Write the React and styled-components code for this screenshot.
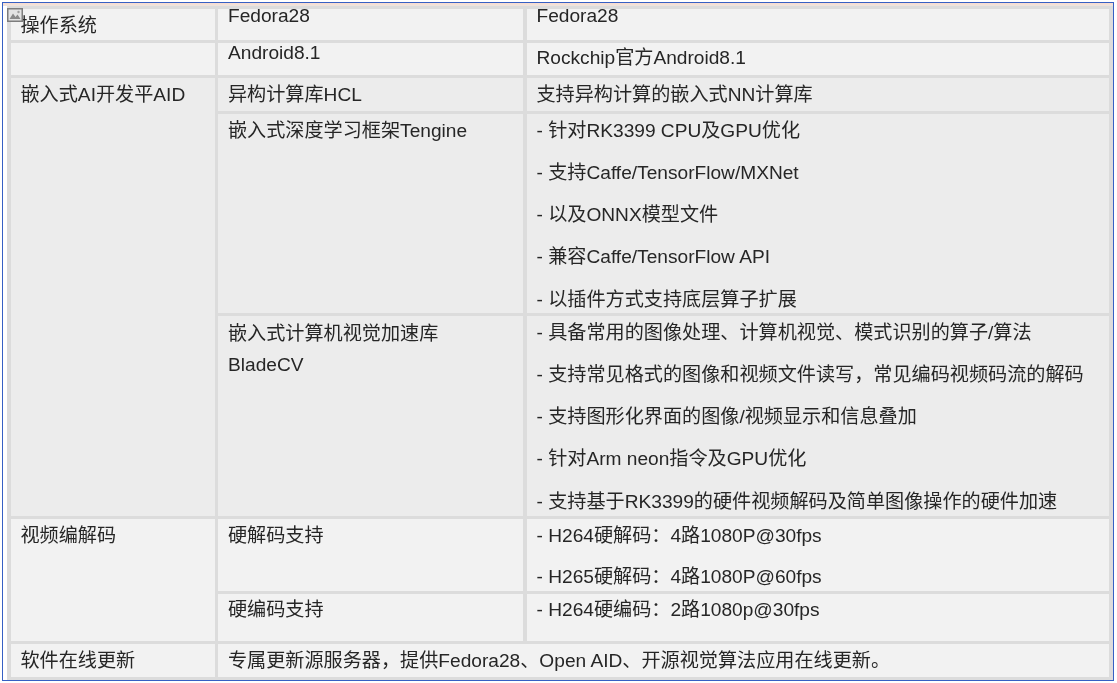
import styled, { createGlobalStyle } from "styled-components";

const GlobalStyle = createGlobalStyle`
  html, body {
    margin: 0;
    padding: 0;
    background: #fff;
  }
  body {
    font-family: "Liberation Sans", "Noto Sans CJK SC", sans-serif;
    color: #262626;
  }
`;

const App = () => {
  return (
    <>
      <GlobalStyle />
      <Frame>
        <TopStrip />
        <BrokenImage viewBox="0 0 16 14">
          <rect x="0.75" y="0.75" width="14.5" height="12.5" fill="#e4e4e4" stroke="#7d7d7d" strokeWidth="1.5" />
          <path d="M2.5 11 L6 5.5 L8.5 9 L10.5 6.5 L13.5 11 Z" fill="#8a8a8a" />
          <circle cx="11.5" cy="4" r="1.2" fill="#a0a0a0" />
        </BrokenImage>
        <Table>
          <Cell $col="1" $row="1">
            <Line $shift={6}>操作系统</Line>
          </Cell>
          <Cell $col="2" $row="1">
            <Line $shift={-4}>Fedora28</Line>
          </Cell>
          <Cell $col="3" $row="1">
            <Line $shift={-4}>Fedora28</Line>
          </Cell>

          <Cell $col="1" $row="2" />
          <Cell $col="2" $row="2">
            <Line $shift={-1}>Android8.1</Line>
          </Cell>
          <Cell $col="3" $row="2">
            <Line $shift={4}>Rockchip官方Android8.1</Line>
          </Cell>

          <Cell $col="1" $row="3 / span 3" $dark>
            <Line>嵌入式AI开发平AID</Line>
          </Cell>
          <Cell $col="2" $row="3" $dark>
            <Line>异构计算库HCL</Line>
          </Cell>
          <Cell $col="3" $row="3" $dark>
            <Line>支持异构计算的嵌入式NN计算库</Line>
          </Cell>

          <Cell $col="2" $row="4" $dark>
            <Line>嵌入式深度学习框架Tengine</Line>
          </Cell>
          <Cell $col="3" $row="4" $dark>
            <LineList>
              <Line>- 针对RK3399 CPU及GPU优化</Line>
              <Line>- 支持Caffe/TensorFlow/MXNet</Line>
              <Line>- 以及ONNX模型文件</Line>
              <Line>- 兼容Caffe/TensorFlow API</Line>
              <Line>- 以插件方式支持底层算子扩展</Line>
            </LineList>
          </Cell>

          <Cell $col="2" $row="5" $dark>
            <LineList $gap={9} $top={1}>
              <Line>嵌入式计算机视觉加速库</Line>
              <Line>BladeCV</Line>
            </LineList>
          </Cell>
          <Cell $col="3" $row="5" $dark>
            <LineList>
              <Line>- 具备常用的图像处理、计算机视觉、模式识别的算子/算法</Line>
              <Line>- 支持常见格式的图像和视频文件读写，常见编码视频码流的解码</Line>
              <Line>- 支持图形化界面的图像/视频显示和信息叠加</Line>
              <Line>- 针对Arm neon指令及GPU优化</Line>
              <Line>- 支持基于RK3399的硬件视频解码及简单图像操作的硬件加速</Line>
            </LineList>
          </Cell>

          <Cell $col="1" $row="6 / span 2">
            <Line>视频编解码</Line>
          </Cell>
          <Cell $col="2" $row="6">
            <Line>硬解码支持</Line>
          </Cell>
          <Cell $col="3" $row="6">
            <LineList $gap={19.5}>
              <Line>- H264硬解码：4路1080P@30fps</Line>
              <Line>- H265硬解码：4路1080P@60fps</Line>
            </LineList>
          </Cell>

          <Cell $col="2" $row="7">
            <Line $shift={5}>硬编码支持</Line>
          </Cell>
          <Cell $col="3" $row="7">
            <Line $shift={5}>- H264硬编码：2路1080p@30fps</Line>
          </Cell>

          <Cell $col="1" $row="8">
            <Line>软件在线更新</Line>
          </Cell>
          <Cell $col="2 / span 2" $row="8">
            <Line>专属更新源服务器，提供Fedora28、Open AID、开源视觉算法应用在线更新。</Line>
          </Cell>
        </Table>
      </Frame>
    </>
  );
};

const Frame = styled.div`
  position: relative;
  box-sizing: border-box;
  width: 1112px;
  height: 679px;
  margin: 2px 0 0 2px;
  border: 1.5px solid #3660c4;
  padding-left: 3.5px;
  background: #fff;
  display: flex;
  flex-direction: column;
`;

const TopStrip = styled.div`
  flex: 0 0 3px;
  margin-left: -3.5px;
  background: linear-gradient(#f9dccf, #ece4df);
`;

const BrokenImage = styled.svg`
  position: absolute;
  left: 4px;
  top: 5px;
  width: 16px;
  height: 14px;
  z-index: 2;
`;

const Table = styled.div`
  flex: 1;
  display: grid;
  grid-template-columns: 204px 305px 582px;
  grid-template-rows: 31px 32px 33px 199px 200px 72px 47px 33px;
  gap: 3px 3.5px;
  padding: 2.5px 3px 3px 4px;
  background: #dcdcdc;
  font-size: 19.14px;
`;

const Cell = styled.div`
  grid-column: ${(props) => props.$col};
  grid-row: ${(props) => props.$row};
  padding: 6px 10px 0;
  background: ${(props) => (props.$dark ? "#ececec" : "#f2f2f2")};
  min-width: 0;
`;

const LineList = styled.div`
  display: flex;
  flex-direction: column;
  gap: ${(props) => props.$gap ?? 20.3}px;
  margin-top: ${(props) => props.$top ?? 0}px;
`;

const Line = styled.div`
  height: 22px;
  line-height: 22px;
  white-space: nowrap;
  filter: blur(0.3px);
  margin-top: ${(props) => (props.$shift !== undefined ? props.$shift - 6 : 0)}px;
`;

export default App;
